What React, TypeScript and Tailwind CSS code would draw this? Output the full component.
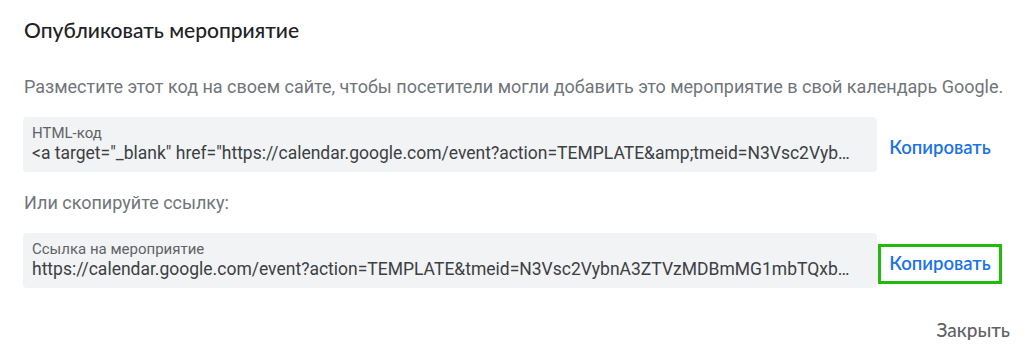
const htmlCode =
  '<a target="_blank" href="https://calendar.google.com/event?action=TEMPLATE&amp;tmeid=N3Vsc2VybnA3ZTVzMDBmMG1mbTQxbnZ0Z2ZzcjA&amp;tmsrc=user%40gmail.com"><img border="0" src="https://www.google.com/calendar/images/ext/gc_button1_ru.gif"></a>'
const eventLink =
  'https://calendar.google.com/event?action=TEMPLATE&tmeid=N3Vsc2VybnA3ZTVzMDBmMG1mbTQxbnZ0Z2ZzcjA&tmsrc=user%40gmail.com'

function CodeField({ label, value, highlighted }: { label: string; value: string; highlighted?: boolean }) {
  return (
    <div className="flex items-center">
      <div className="w-[854px] h-[55px] shrink-0 rounded bg-[#f1f3f4] pl-[9px] pr-[18px] pt-[8px]">
        <div className="text-[15px] leading-[16px] text-[#5f6368]">{label}</div>
        <div className="truncate text-[17.5px] leading-[24px] text-[#3c4043]">{value}</div>
      </div>
      <button
        className={
          highlighted
            ? 'ml-px mt-[7px] h-[40px] w-[124px] border-[3px] border-[#1fba0b] text-[18.5px] font-semibold text-[#1a73e8] [font-family:Lato]'
            : 'ml-px mt-[7px] h-[40px] w-[124px] border-[3px] border-transparent text-[18.5px] font-semibold text-[#1a73e8] [font-family:Lato]'
        }
      >
        Копировать
      </button>
    </div>
  )
}

export default function App() {
  return (
    <div className="w-[1027px] h-[357px] bg-white pl-[23px] pt-[16px] [font-family:Roboto,sans-serif]">
      <h2 className="pl-px text-[21px] leading-[28px] font-medium text-[#202124] [font-family:Lato]">Опубликовать мероприятие</h2>
      <p className="mt-[30px] pl-px text-[18px] leading-[26px] text-[#70757a]">
        Разместите этот код на своем сайте, чтобы посетители могли добавить это мероприятие в свой календарь Google.
      </p>
      <div className="mt-[17px]">
        <CodeField label="HTML-код" value={htmlCode} />
      </div>
      <p className="mt-[18px] pl-px text-[18px] leading-[26px] text-[#70757a]">Или скопируйте ссылку:</p>
      <div className="mt-[17px]">
        <CodeField label="Ссылка на мероприятие" value={eventLink} highlighted />
      </div>
      <div className="flex justify-end pr-[17px] mt-[29px]">
        <button className="text-[19px] leading-[26px] font-medium text-[#5f6368] [font-family:Lato]">Закрыть</button>
      </div>
    </div>
  )
}
